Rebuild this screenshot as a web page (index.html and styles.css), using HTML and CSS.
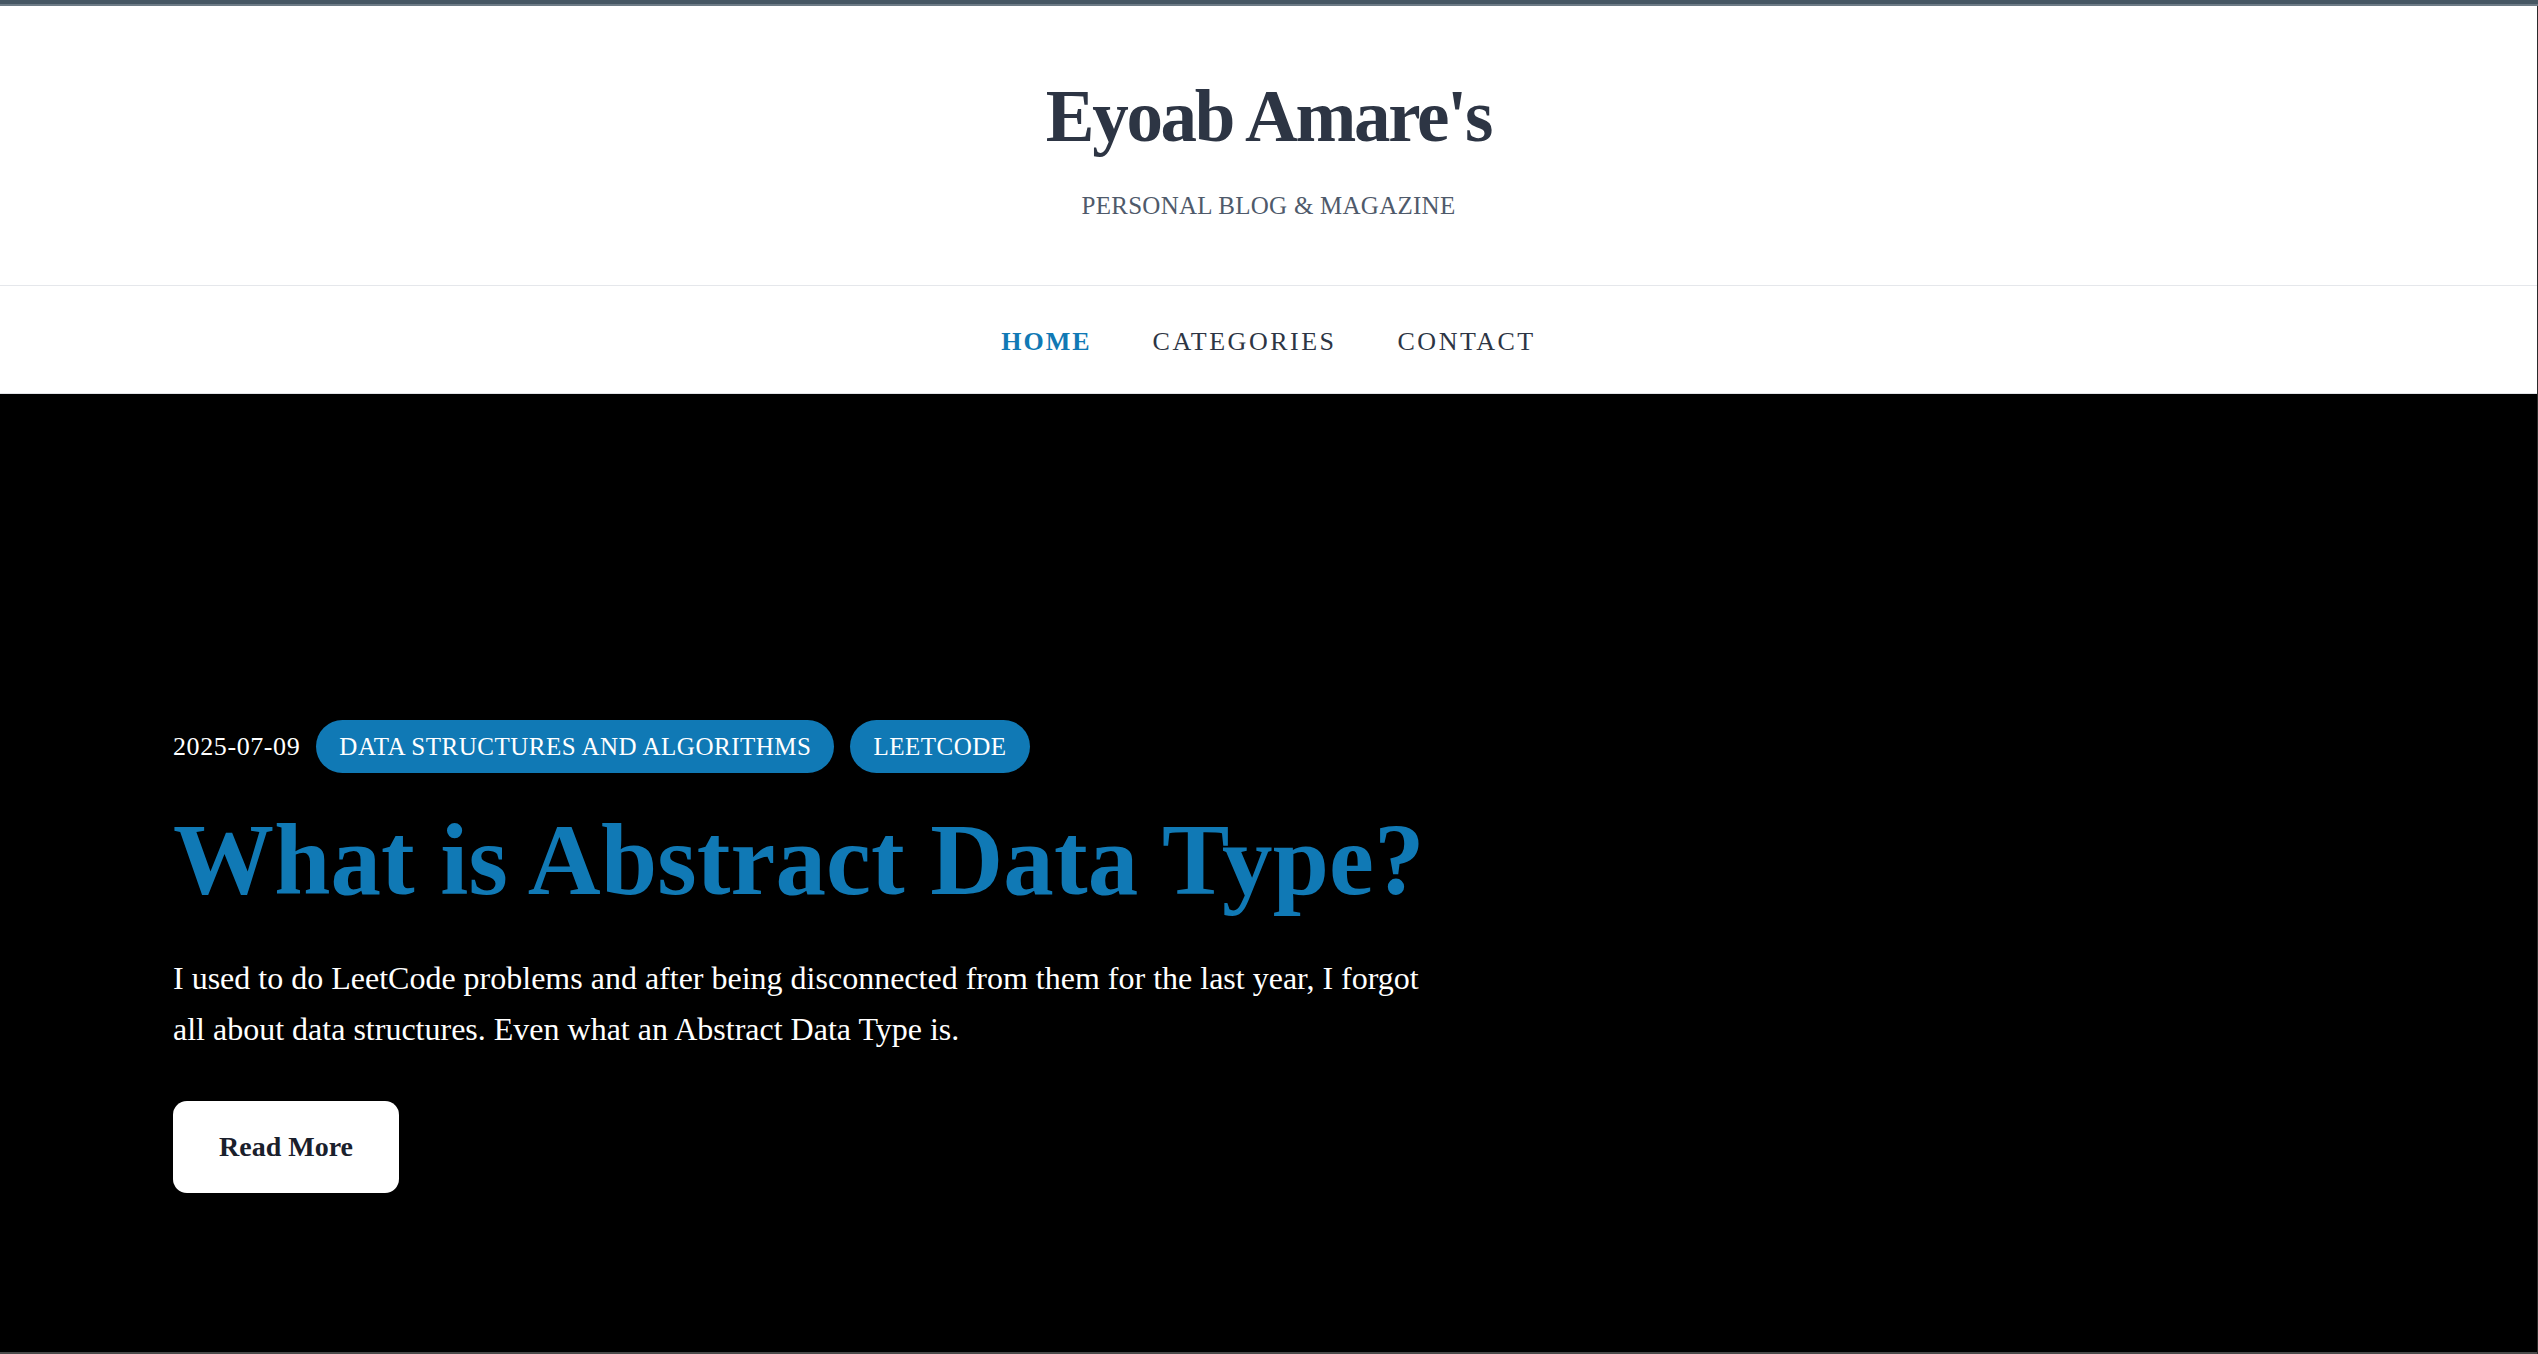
FILE: index.html
```html
<!DOCTYPE html>
<html lang="en">
<head>
<meta charset="utf-8">
<title>Eyoab Amare's</title>
<link rel="stylesheet" href="styles.css">
</head>
<body>
<div class="page">
  <div class="topbar"></div>
  <div class="frame">
    <header class="masthead">
      <h1 class="site-title">Eyoab Amare's</h1>
      <p class="site-tagline">PERSONAL BLOG &amp; MAGAZINE</p>
    </header>
    <nav class="mainnav">
      <a class="nav-link active" href="#">HOME</a>
      <a class="nav-link" href="#">CATEGORIES</a>
      <a class="nav-link" href="#">CONTACT</a>
    </nav>
    <section class="hero">
      <article class="hero-post">
        <div class="meta">
          <span class="date">2025-07-09</span>
          <a class="tag" href="#">DATA STRUCTURES AND ALGORITHMS</a>
          <a class="tag" href="#">LEETCODE</a>
        </div>
        <h2 class="post-title">What is Abstract Data Type?</h2>
        <p class="excerpt">I used to do LeetCode problems and after being disconnected from them for the last year, I forgot all about data structures. Even what an Abstract Data Type is.</p>
        <a class="read-more" href="#">Read More</a>
      </article>
    </section>
  </div>
</div>
</body>
</html>
```

FILE: styles.css
```css
html, body {
  margin: 0;
  padding: 0;
  background: #ffffff;
}

body {
  font-family: "Liberation Serif", "Times New Roman", serif;
}

.page {
  height: 1354px;
  display: flex;
  flex-direction: column;
  overflow: hidden;
}

.topbar {
  height: 4px;
  background: #465763;
  border-bottom: 2px solid #6d7b86;
  flex: none;
}

.frame {
  flex: 1;
  display: flex;
  flex-direction: column;
  border-right: 1px solid #2b2b2b;
}

.masthead {
  height: 280px;
  box-sizing: border-box;
  padding-top: 75px;
  border-bottom: 1px solid #e5e7eb;
  display: flex;
  flex-direction: column;
  align-items: center;
  flex: none;
}

.site-title {
  margin: 0;
  font-size: 73px;
  line-height: 72px;
  font-weight: 700;
  letter-spacing: -2.3px;
  color: #2d3544;
}

.site-tagline {
  margin: 40px 0 0;
  font-size: 25px;
  line-height: 25px;
  letter-spacing: 0.25px;
  color: #4f5a6b;
}

.mainnav {
  height: 108px;
  box-sizing: border-box;
  padding-top: 5px;
  border-bottom: 1px solid #e2e4e8;
  display: flex;
  align-items: center;
  justify-content: center;
  gap: 61px;
  flex: none;
}

.nav-link {
  font-size: 26px;
  letter-spacing: 2.5px;
  color: #2d3544;
  text-decoration: none;
}

.nav-link.active {
  color: #1079b5;
  font-weight: 700;
  letter-spacing: 2px;
}

.hero {
  flex: 1;
  background: #000000;
  border-bottom: 2px solid #4a4a4a;
  padding: 326px 0 0 173px;
}

.hero-post {
  width: 1265px;
}

.meta {
  display: flex;
  align-items: center;
  gap: 16px;
}

.date {
  font-size: 26px;
  letter-spacing: 0.6px;
  color: #ffffff;
}

.tag {
  font-size: 25px;
  line-height: 31px;
  letter-spacing: 0.5px;
  padding: 11px 23px;
  border-radius: 27px;
  background: #1079b5;
  color: #ffffff;
  text-decoration: none;
}

.post-title {
  margin: 27px 0 0;
  font-size: 101px;
  line-height: 120px;
  font-weight: 700;
  letter-spacing: 0.15px;
  color: #1079b5;
}

.excerpt {
  margin: 33px 0 0;
  font-size: 32px;
  line-height: 51px;
  color: #ffffff;
}

.read-more {
  display: inline-block;
  margin-top: 46px;
  padding: 32px 46px;
  font-size: 28px;
  line-height: 28px;
  font-weight: 700;
  color: #1a202c;
  background: #ffffff;
  border-radius: 14px;
  text-decoration: none;
}
```
